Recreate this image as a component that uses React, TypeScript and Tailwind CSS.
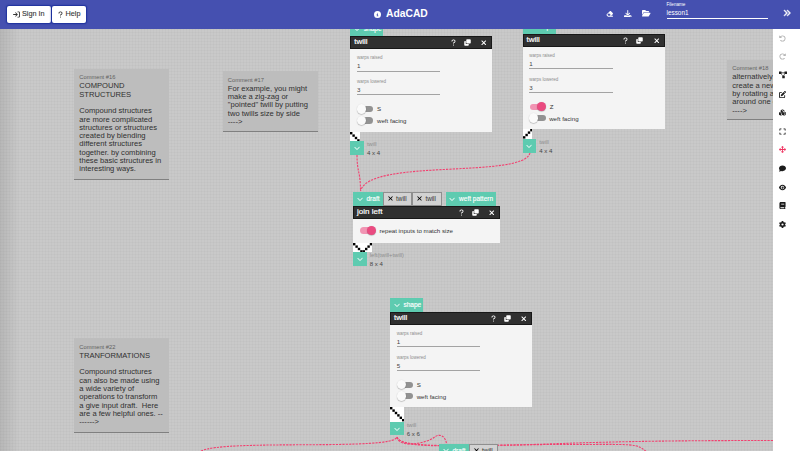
import type { ReactNode } from 'react';
import {
  FaAnglesRight, FaArrowRightToBracket, FaArrowRotateLeft, FaArrowRotateRight, FaArrowsUpDownLeftRight,
  FaBook, FaChevronDown, FaCircleInfo, FaClone, FaComment, FaCubes, FaDownload, FaEraser, FaExpand, FaEye,
  FaFolderOpen, FaGear, FaPenToSquare, FaQuestion, FaXmark,
} from 'react-icons/fa6';

type Place = { left: number; top: number };

function NodesIcon() {
  return (
    <svg viewBox="0 0 16 16" className="size-[8px]" fill="currentColor">
      <path d="M0 1h5v2h6V1h5v5h-4.3L10 9.5h1.5v5h-5v-5L4.2 6H0zM5 4.5v.8l2.6 4.2h.8L11 5.3v-.8z" />
    </svg>
  );
}

function CopyIcon() {
  return (
    <svg viewBox="0 0 14 14" className="mr-[9.5px] size-[7px]" fill="currentColor">
      <rect x="4.500" y="0.500" width="9" height="8.500" rx="1.500" />
      <path d="M3.500 4v6h6v2a1.500 1.500 0 0 1-1.500 1.500H2A1.500 1.500 0 0 1 .5 12V5.500A1.500 1.500 0 0 1 2 4z" />
    </svg>
  );
}

function HeaderBar({ title }: { title: string }) {
  return (
    <div className="flex h-[13.5px] items-center border border-[#181818] bg-[#303030] pl-[3px] pr-[3.5px] text-white">
      <span className="flex-1 text-[8px] leading-[10px] [-webkit-text-stroke:0.2px_white]">{title}</span>
      <FaQuestion className="mr-[7px] size-[7px]" />
      <CopyIcon />
      <FaXmark className="size-[7.5px]" />
    </div>
  );
}

function Field({ label, value }: { label: string; value: string }) {
  return (
    <div className="mb-[6.5px] h-[17.3px] w-[83.5px] border-b border-[#a3a3a3]">
      <div className="text-[4.5px] leading-[7px] text-[#8c8c8c]">{label}</div>
      <div className="text-[6.2px] leading-[9px] text-[#444]">{value}</div>
    </div>
  );
}

function Toggle({ label, on = false }: { label: string; on?: boolean }) {
  return (
    <div className="flex h-[11.3px] items-center text-[6.15px] text-[#333]">
      <span className={`mr-[3.5px] flex h-[6.5px] w-[14.5px] items-center rounded-full ${on ? 'ml-[0.5px] mr-[5.5px] justify-end bg-[#f194b3]' : 'ml-[2px] bg-[#929292]'}`}>
        <span className={`size-[9.3px] shrink-0 rounded-full shadow-[0_0.5px_1px_rgba(0,0,0,0.35)] ${on ? '-mr-[2px] bg-[#ea4b80]' : '-ml-[2px] bg-[#fafafa]'}`} />
      </span>
      {label}
    </div>
  );
}

function InletTab({ children, width }: { children: ReactNode; width: number }) {
  return (
    <div className="flex h-[13.5px] items-center bg-[#5ecbb0] pl-[3.5px] text-[6.5px] leading-[9px] text-white [-webkit-text-stroke:0.15px_white]" style={{ width }}>
      <FaChevronDown className="mr-[4px] size-[6px] shrink-0" /><span className="whitespace-nowrap">{children}</span>
    </div>
  );
}

function ConnectedTab() {
  return (
    <div className="flex h-[13.5px] w-[29.3px] items-center border border-[#8f8f8f] bg-[#d2d2d2] pl-[2.8px] text-[6.3px] leading-[9px] text-[#333]">
      <FaXmark className="mr-[2.3px] size-[7px] text-black" />twill
    </div>
  );
}

function Draft({ cols, rows, cells }: { cols: number; rows: number; cells: [number, number][] }) {
  return (
    <svg viewBox={`0 0 ${cols} ${rows}`} className="block bg-white" style={{ width: cols * 2.4, height: rows * 2.4 }}>
      {cells.map(([x, y], i) => <rect key={i} x={x} y={y} width="1" height="1" fill="#000" />)}
    </svg>
  );
}

function Outlet({ name, size }: { name: string; size: string }) {
  return (
    <div className="flex">
      <div className="flex size-[13.7px] items-center justify-center bg-[#5ecbb0] text-white"><FaChevronDown className="size-[6px]" /></div>
      <div className="pl-[3px] pt-[0.3px] text-[6.1px] leading-[7.8px]">
        <div className="text-[5.8px] text-[#8e8e8e]">{name}</div>
        <div className="text-[#444]">{size}</div>
      </div>
    </div>
  );
}

type TwillProps = Place & { lowered: string; letter: string; on?: boolean; cells: [number, number][]; n: number };

function TwillNode({ left, top, lowered, letter, on, cells, n }: TwillProps) {
  return (
    <section className="absolute w-[142px]" style={{ left, top }}>
      <InletTab width={33}>shape</InletTab>
      <HeaderBar title="twill" />
      <div className="h-[82.3px] bg-[#f4f4f4] pl-[6.7px] pt-[5.2px]">
        <Field label="warps raised" value="1" />
        <Field label="warps lowered" value={lowered} />
        <div className="pt-[1.4px]">
          <Toggle label={letter} on={on} />
          <Toggle label="weft facing" />
        </div>
      </div>
      <Draft cols={n} rows={n} cells={cells} />
      <Outlet name="twill" size={`${n} x ${n}`} />
    </section>
  );
}

function Comment({ left, top, height, id, children }: Place & { height: number; id: string; children: string }) {
  return (
    <article className="absolute w-[95px] border-b border-[#808080] bg-[#bdbdbd] pl-[5.3px] pt-[4.5px]" style={{ left, top, height }}>
      <div className="text-[5.75px] leading-[8px] text-[#626262]">Comment #{id}</div>
      <p className="whitespace-pre pt-[1.2px] text-[7.6px] leading-[8.33px] text-[#303030]">{children}</p>
    </article>
  );
}

const down = (n: number) => Array.from({ length: n }, (_, i) => [i, i] as [number, number]);
const up = (n: number) => Array.from({ length: n }, (_, i) => [i, n - 1 - i] as [number, number]);
const vee: [number, number][] = [...down(4), ...up(4).map(([x, y]) => [x + 4, y] as [number, number])];

const tools: { icon: ReactNode; color: string }[] = [
  { icon: <FaArrowRotateLeft />, color: 'text-[#b3b3b3]' },
  { icon: <FaArrowRotateRight />, color: 'text-[#b3b3b3]' },
  { icon: <NodesIcon />, color: 'text-[#1c1c1c]' },
  { icon: <FaPenToSquare />, color: 'text-[#1c1c1c]' },
  { icon: <FaCubes />, color: 'text-[#1c1c1c]' },
  { icon: <FaExpand />, color: 'text-[#1c1c1c]' },
  { icon: <FaArrowsUpDownLeftRight />, color: 'text-[#f0315f]' },
  { icon: <FaComment />, color: 'text-[#1c1c1c]' },
  { icon: <FaEye />, color: 'text-[#1c1c1c]' },
  { icon: <FaBook />, color: 'text-[#1c1c1c]' },
  { icon: <FaGear />, color: 'text-[#1c1c1c]' },
];

export default function App() {
  return (
    <div className="flex h-[451px] w-[800px] flex-col overflow-hidden font-['Liberation_Sans',Arial,sans-serif]">
      <header className="flex h-[29px] shrink-0 items-start bg-[#4550b0] text-white">
        <div className="flex gap-px pl-[7px] pt-[6px] text-[7.3px] text-[#333]">
          <button className="flex h-[17px] w-[44px] items-center justify-center gap-[1.5px] rounded-[2px] bg-white shadow-[0_0_1.5px_1px_#1c2f9c] [-webkit-text-stroke:0.1px_#333]"><FaArrowRightToBracket className="size-[7px]" />Sign In</button>
          <button className="flex h-[17px] w-[34px] items-center justify-center gap-[1px] rounded-[2px] bg-white shadow-[0_0_1.5px_1px_#1c2f9c] [-webkit-text-stroke:0.1px_#333]"><FaQuestion className="size-[7px]" />Help</button>
        </div>
        <div className="ml-[288px] flex h-[27px] w-[232px] items-center gap-[5px] text-[10.3px] font-bold">
          <FaCircleInfo className="mt-[2px] size-[7px]" />AdaCAD
        </div>
        <div className="flex h-[27px] w-[60.5px] items-center gap-[10.5px]">
          <FaEraser className="size-[7.5px]" /><FaDownload className="size-[7.5px]" /><FaFolderOpen className="size-[8.5px]" />
        </div>
        <div className="h-[19px] w-[101px] border-b border-white pt-[2px]">
          <div className="text-[4.6px] leading-[6px]">Filename</div>
          <div className="text-[6.4px] leading-[10px]">lesson1</div>
        </div>
        <FaAnglesRight className="ml-[15px] mt-[9px] size-[8px] [stroke-width:30px] [stroke:white]" />
      </header>
      <div className="flex min-h-0 flex-1">
        <main className="relative min-w-0 flex-1 overflow-hidden bg-[#c9c9c9] bg-[linear-gradient(to_right,rgba(0,0,0,0.09),transparent_20px),linear-gradient(to_right,rgba(0,0,0,0.02)_1px,transparent_1px),linear-gradient(to_bottom,rgba(0,0,0,0.02)_1px,transparent_1px)] bg-[size:100%_100%,3px_3px,3px_3px]">
          <svg viewBox="0 29 773 422" className="absolute inset-0 h-[422px] w-[773px]" fill="none" stroke="#f2406f" strokeWidth="1.1" strokeDasharray="2.2 1.1">
            <path d="M357 155C357 172 360.5 172 360.5 191" />
            <path d="M530 153C523 179 369 158 360.5 191" />
            <path d="M201 451C225 439 394 451 397 437" />
            <path d="M397 437C399 449 427 443 434 437.5S446 438 446.5 444" />
            <path d="M397 437C399 450 480 444.500 560 444.500S635 443 647 452" />
            <path d="M397 437C402 448 435 446 520 445C600 442 650 440.500 773 440.500" />
          </svg>

          <Comment left={74} top={39.500} height={111.500} id="16">{'COMPOUND\nSTRUCTURES\n\nCompound structures\nare more complicated\nstructures or structures\ncreated by blending\ndifferent structures\ntogether. by combining\nthese basic structures in\ninteresting ways.'}</Comment>
          <Comment left={222.500} top={42} height={60.500} id="17">{'For example, you might\nmake a zig-zag or\n"pointed" twill by putting\ntwo twills size by side\n---->'}</Comment>
          <Comment left={727} top={30.500} height={60} id="18">{'alternatively,\ncreate a new\nby rotating a\naround one o\n---->'}</Comment>
          <Comment left={74} top={309} height={94.500} id="22">{'TRANFORMATIONS\n\nCompound structures\ncan also be made using\na wide variety of\noperations to transform\na give input draft.  Here\nare a few helpful ones. --\n------>'}</Comment>

          <TwillNode left={350.300} top={-6.800} lowered="3" letter="S" n={4} cells={down(4)} />
          <TwillNode left={522.500} top={-9} lowered="3" letter="Z" on n={4} cells={up(4)} />
          <TwillNode left={390} top={269} lowered="5" letter="S" n={6} cells={down(6)} />

          <section className="absolute left-[353px] top-[163px] w-[147px]">
            <div className="flex">
              <InletTab width={30}>draft</InletTab>
              <ConnectedTab />
              <ConnectedTab />
              <div className="ml-[4px]"><InletTab width={50.500}>weft pattern</InletTab></div>
            </div>
            <HeaderBar title="join left" />
            <div className="flex h-[23.500px] items-center bg-[#f4f4f4] pl-[6px]">
              <Toggle label="repeat inputs to match size" on />
            </div>
            <Draft cols={8} rows={4} cells={vee} />
            <Outlet name="left(twill+twill)" size="8 x 4" />
          </section>
          <div className="absolute left-[439px] top-[414.500px] flex">
            <InletTab width={30}>draft</InletTab>
            <ConnectedTab />
          </div>
        </main>
        <aside className="flex w-[27px] shrink-0 flex-col items-center bg-white pr-[8px] text-[7px]">
          {tools.map((t, i) => (
            <button key={i} className={`flex h-[18.600px] w-full shrink-0 items-center justify-center ${t.color}`}>{t.icon}</button>
          ))}
        </aside>
      </div>
    </div>
  );
}
